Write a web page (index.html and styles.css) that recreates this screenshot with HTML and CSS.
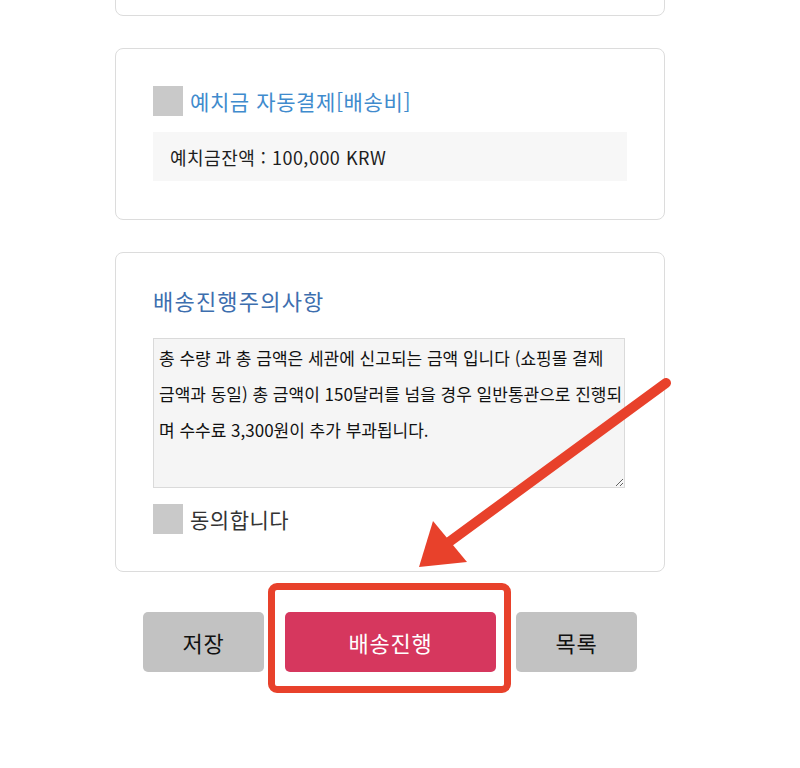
FILE: index.html
```html
<!DOCTYPE html>
<html lang="ko">
<head>
<meta charset="utf-8">
<title>배송진행</title>
<link rel="stylesheet" href="styles.css">
</head>
<body>
<div class="page">
  <div class="card card-top"></div>

  <div class="card card-deposit">
    <label class="check-row">
      <span class="check-box"></span>
      <span class="deposit-title">예치금 자동결제[배송비]</span>
    </label>
    <div class="balance">예치금잔액 : 100,000 KRW</div>
  </div>

  <div class="card card-notice">
    <h2 class="notice-title">배송진행주의사항</h2>
    <textarea class="notice-text" readonly>총 수량 과 총 금액은 세관에 신고되는 금액 입니다 (쇼핑몰 결제
금액과 동일) 총 금액이 150달러를 넘을 경우 일반통관으로 진행되
며 수수료 3,300원이 추가 부과됩니다.</textarea>
    <label class="check-row agree-row">
      <span class="check-box"></span>
      <span class="agree-text">동의합니다</span>
    </label>
  </div>

  <div class="actions">
    <button class="btn btn-gray btn-save">저장</button>
    <span class="highlight-wrap">
      <button class="btn btn-primary">배송진행</button>
      <span class="highlight"></span>
    </span>
    <button class="btn btn-gray btn-list">목록</button>
  </div>
</div>

<svg class="arrow" width="800" height="768" viewBox="0 0 800 768">
  <line x1="666" y1="383" x2="445" y2="545" stroke="#e8412b" stroke-width="10" stroke-linecap="round"/>
  <polygon points="419,567 433,521 467,562" fill="#e8412b"/>
</svg>
</body>
</html>
```

FILE: styles.css
```css
* { box-sizing: border-box; }

html, body {
  margin: 0;
  padding: 0;
  background: #ffffff;
  overflow: hidden;
}

body {
  font-family: "Noto Sans CJK KR", "Noto Sans", sans-serif;
  color: #222;
  width: 800px;
  height: 768px;
  position: relative;
}

.page {
  width: 550px;
  margin-left: 115px;
  display: flex;
  flex-direction: column;
  gap: 32px;
}

.card {
  border: 1px solid #dcdcdc;
  border-radius: 8px;
  background: #fff;
}

.card-top {
  margin-top: -60px;
  height: 76px;
}

.card-deposit {
  padding: 37px 37px 38px;
  display: flex;
  flex-direction: column;
  gap: 16px;
}

.check-row {
  display: flex;
  align-items: center;
  gap: 7px;
  height: 30px;
}

.check-box {
  width: 30px;
  height: 30px;
  background: #c9c9c9;
  flex: none;
}

.deposit-title {
  font-size: 21px;
  letter-spacing: 0.6px;
  color: #3f8bcd;
  line-height: 30px;
}

.balance {
  height: 49px;
  background: #f7f7f7;
  display: flex;
  align-items: center;
  padding-left: 17px;
  font-size: 18px;
  letter-spacing: 0.5px;
  color: #1e1e1e;
}

.card-notice {
  padding: 32px 37px 37px;
  display: flex;
  flex-direction: column;
}

.notice-title {
  margin: 0;
  font-size: 22px;
  letter-spacing: 1.2px;
  font-weight: 400;
  line-height: 30px;
  color: #3d6eae;
}

.notice-text {
  margin-top: 23px;
  width: 472px;
  height: 150px;
  border: 1px solid #dadada;
  background: #f5f5f5;
  font-family: "Noto Sans CJK KR", "Noto Sans", sans-serif;
  font-size: 17px;
  line-height: 36px;
  padding: 1px 0 0 5px;
  color: #111;
  white-space: pre;
  overflow: hidden;
  letter-spacing: 0;
  outline: none;
}

.agree-row {
  margin-top: 16px;
}

.agree-text {
  font-size: 21px;
  letter-spacing: 0.5px;
  color: #333;
}

.actions {
  margin-top: 8px;
  display: flex;
  justify-content: center;
  align-items: center;
}

.btn {
  height: 60px;
  border: none;
  border-radius: 5px;
  font-family: "Noto Sans CJK KR", "Noto Sans", sans-serif;
  font-size: 22px;
  letter-spacing: 0.8px;
  padding: 0;
}

.btn-gray {
  width: 121px;
  background: #c2c2c2;
  color: #111;
}

.btn-primary {
  width: 211px;
  background: #d6375e;
  color: #fff;
  display: block;
}

.highlight-wrap {
  position: relative;
  margin: 0 20px 0 21px;
}

.highlight {
  position: absolute;
  left: -17px;
  right: -15px;
  top: -29px;
  bottom: -21px;
  border: 7px solid #e8412b;
  border-radius: 9px;
  pointer-events: none;
}

.arrow {
  position: absolute;
  left: 0;
  top: 0;
  pointer-events: none;
}
```
